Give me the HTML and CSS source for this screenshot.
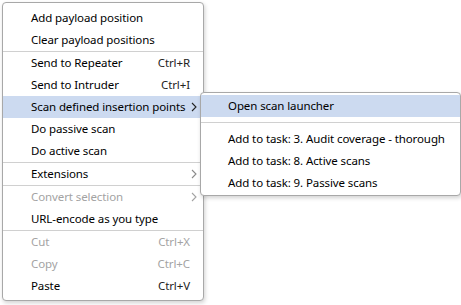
FILE: index.html
```html
<!DOCTYPE html>
<html lang="en">
<head>
  <meta charset="UTF-8">
  <title>Context menu</title>
  <link rel="stylesheet" href="styles.css">
</head>
<body class="cm-body">

<div class="cm-desk">
  <div class="cm-menu cm-main">
    <div class="cm-item"><span class="cm-label">Add payload position</span></div>
    <div class="cm-item"><span class="cm-label">Clear payload positions</span></div>
    <div class="cm-sep"></div>
    <div class="cm-item"><span class="cm-label">Send to Repeater</span><span class="cm-key">Ctrl+R</span></div>
    <div class="cm-item"><span class="cm-label">Send to Intruder</span><span class="cm-key">Ctrl+I</span></div>
    <div class="cm-item cm-sub cm-active">
      <span class="cm-label">Scan defined insertion points</span>
      <svg class="cm-arrow" width="6" height="10" viewBox="0 0 6 10"><path d="M1 1 L5 5 L1 9" fill="none" stroke="currentColor" stroke-width="1.1"/></svg>
    </div>
    <div class="cm-item"><span class="cm-label">Do passive scan</span></div>
    <div class="cm-item"><span class="cm-label">Do active scan</span></div>
    <div class="cm-sep"></div>
    <div class="cm-item cm-sub">
      <span class="cm-label">Extensions</span>
      <svg class="cm-arrow cm-arrow-soft" width="6" height="10" viewBox="0 0 6 10"><path d="M1 1 L5 5 L1 9" fill="none" stroke="currentColor" stroke-width="1.1"/></svg>
    </div>
    <div class="cm-sep"></div>
    <div class="cm-item cm-sub cm-disabled">
      <span class="cm-label">Convert selection</span>
      <svg class="cm-arrow" width="6" height="10" viewBox="0 0 6 10"><path d="M1 1 L5 5 L1 9" fill="none" stroke="currentColor" stroke-width="1.1"/></svg>
    </div>
    <div class="cm-item"><span class="cm-label">URL-encode as you type</span></div>
    <div class="cm-sep"></div>
    <div class="cm-item cm-disabled"><span class="cm-label">Cut</span><span class="cm-key">Ctrl+X</span></div>
    <div class="cm-item cm-disabled"><span class="cm-label">Copy</span><span class="cm-key">Ctrl+C</span></div>
    <div class="cm-item"><span class="cm-label">Paste</span><span class="cm-key">Ctrl+V</span></div>
  </div>

  <div class="cm-menu cm-popup">
    <div class="cm-item cm-active"><span class="cm-label">Open scan launcher</span></div>
    <div class="cm-sep cm-sep-wide"></div>
    <div class="cm-item"><span class="cm-label">Add to task: 3. Audit coverage - thorough</span></div>
    <div class="cm-item"><span class="cm-label">Add to task: 8. Active scans</span></div>
    <div class="cm-item"><span class="cm-label">Add to task: 9. Passive scans</span></div>
  </div>
</div>

</body>
</html>
```

FILE: styles.css
```css
/* base */
.cm-body {
  margin: 0;
  padding: 0;
  background: #fff;
  font-family: "Noto Sans", sans-serif;
  font-size: 11.5px;
  letter-spacing: -0.1px;
  color: #000;
}

.cm-desk {
  position: relative;
  width: 461px;
  height: 305px;
  overflow: hidden;
}

/* menus */
.cm-menu {
  background: #fff;
  border: 1px solid #a8a8a8;
  border-radius: 4px;
  box-shadow: 1px 2px 4px rgba(0, 0, 0, .18);
}

.cm-main {
  width: 200px;
  margin: 2px 0 0 2px;
  padding: 4px 0 3px;
}

.cm-popup {
  position: absolute;
  top: 92px;
  left: 200px;
  width: 259px;
  padding: 2px 0 1px;
}

/* items */
.cm-item {
  box-sizing: border-box;
  display: flex;
  align-items: center;
  height: 22px;
  padding: 0 13px 1px 28px;
  white-space: nowrap;
}

.cm-popup .cm-item {
  padding-left: 27px;
}

.cm-label {
  flex: 1;
}

.cm-key {
  color: #222;
}

.cm-sub {
  padding-right: 6px;
}

.cm-arrow {
  color: #222;
}

.cm-arrow-soft {
  color: #8a8a8a;
}

.cm-active {
  background: #ccdaf0;
}

.cm-disabled,
.cm-disabled .cm-key,
.cm-disabled .cm-arrow {
  color: #a3a3a3;
}

/* separators */
.cm-sep {
  height: 1px;
  background: #d0d0d0;
}

.cm-sep-wide {
  margin: 5px 0;
}
```
